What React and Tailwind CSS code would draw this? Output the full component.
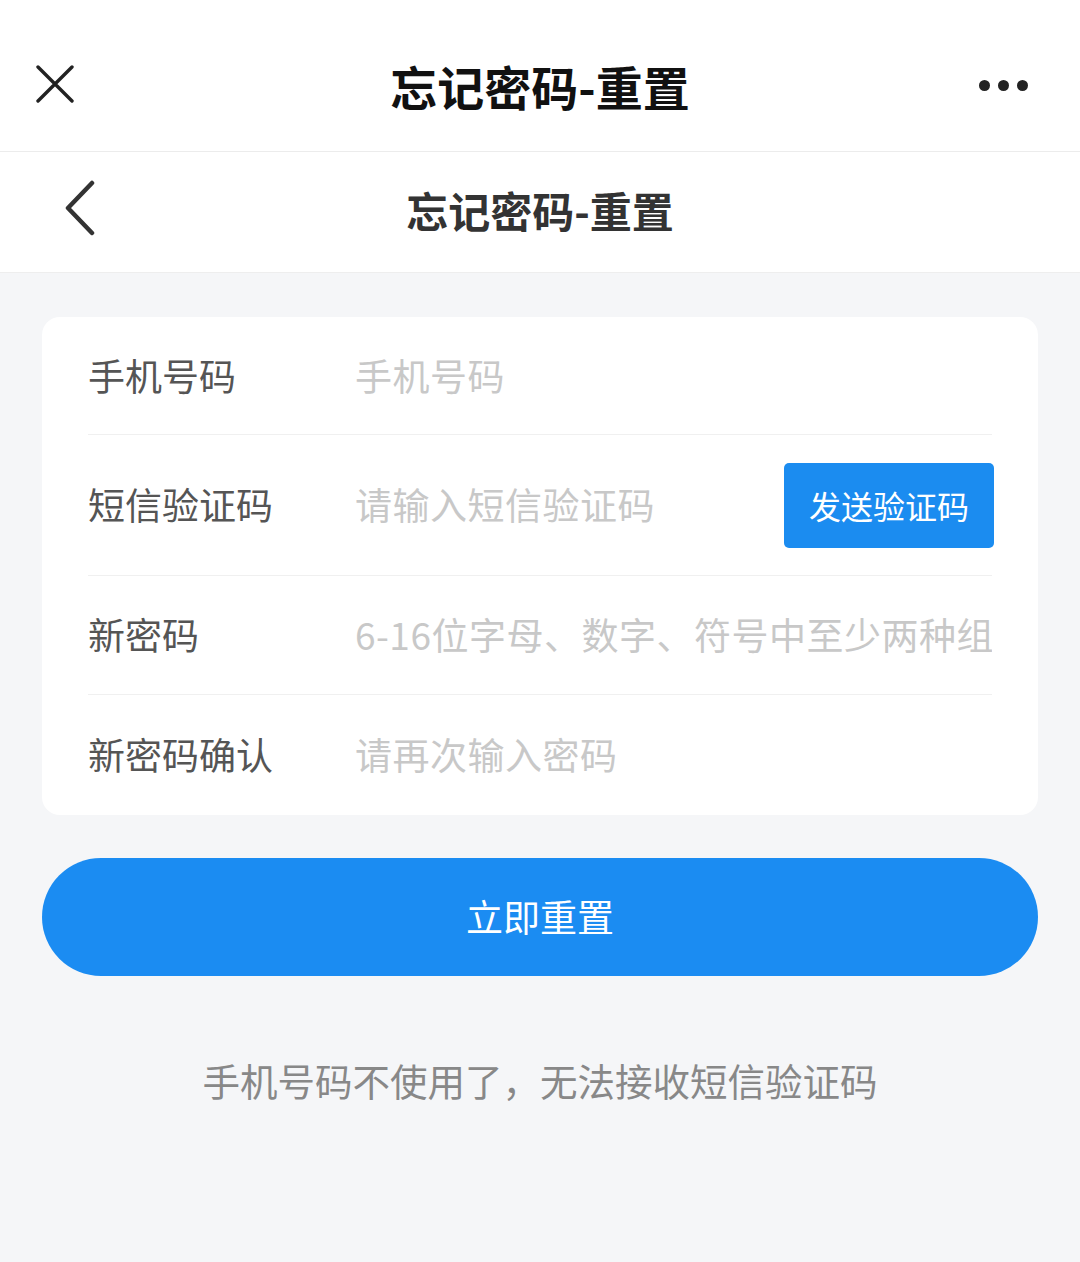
const font = { fontFamily: '"Noto Sans CJK SC", "Noto Sans", sans-serif' };

const rows = [
    { label: '手机号码', placeholder: '手机号码', h: 'h-[118px]' },
    { label: '短信验证码', placeholder: '请输入短信验证码', h: 'h-[141px]', send: true },
    { label: '新密码', placeholder: '6-16位字母、数字、符号中至少两种组合', h: 'h-[119px]' },
    { label: '新密码确认', placeholder: '请再次输入密码', h: 'h-[120px]', last: true },
];

const App = () => {
    return (
        <div className="w-[1080px] h-[1262px] bg-[#f5f6f8] flex flex-col" style={font}>
            {/* Outer app bar */}
            <div className="h-[152px] bg-white border-b border-[#ececec] flex items-center justify-between px-[36px] pt-[20px] relative">
                <svg width="38" height="38" viewBox="0 0 38 38" className="mt-[-4px]">
                    <path d="M2 2 L36 36 M36 2 L2 36" stroke="#222" strokeWidth="3.4" strokeLinecap="round" />
                </svg>
                <div className="absolute left-0 right-0 top-[56px] text-center text-[47px] leading-[60px] font-bold text-[#111] pointer-events-none">
                    忘记密码-重置
                </div>
                <div className="flex gap-[8px] mr-[16px]">
                    <span className="w-[11px] h-[11px] rounded-full bg-[#222]" />
                    <span className="w-[11px] h-[11px] rounded-full bg-[#222]" />
                    <span className="w-[11px] h-[11px] rounded-full bg-[#222]" />
                </div>
            </div>

            {/* Page nav bar */}
            <div className="h-[121px] bg-white border-b border-[#eeeeee] flex items-center px-[64px] relative">
                <svg width="32" height="56" viewBox="0 0 32 56" className="mt-[-8px]">
                    <path d="M28 3 L4 28 L28 53" fill="none" stroke="#333" strokeWidth="4.5" strokeLinecap="round" strokeLinejoin="round" />
                </svg>
                <div className="absolute left-0 right-0 text-center text-[42px] font-bold text-[#333] mt-[-6px]">
                    忘记密码-重置
                </div>
            </div>

            {/* Form card */}
            <div className="mx-[42px] mt-[44px] bg-white rounded-[18px] px-[46px]">
                {rows.map((r) => (
                    <div key={r.label} className={`${r.h} flex items-center ${r.last ? '' : 'border-b border-[#f0f0f0]'}`}>
                        <div className="w-[267px] shrink-0 text-[37px] text-[#555]">{r.label}</div>
                        <div className="flex-1 min-w-0 overflow-hidden whitespace-nowrap text-[37px] text-[#c8c8c8] tracking-[0.5px]">
                            {r.placeholder}
                        </div>
                        {r.send && (
                            <div className="w-[210px] h-[85px] shrink-0 mr-[-2px] bg-[#1b8cf0] rounded-[5px] flex items-center justify-center text-white text-[32px]">
                                发送验证码
                            </div>
                        )}
                    </div>
                ))}
            </div>

            {/* Submit */}
            <div className="mx-[42px] mt-[43px] h-[118px] rounded-full bg-[#1b8cf2] flex items-center justify-center text-white text-[37px]">
                立即重置
            </div>

            <div className="mt-[76px] text-center text-[37.5px] text-[#888]">
                手机号码不使用了，无法接收短信验证码
            </div>
        </div>
    );
};

export default App;
